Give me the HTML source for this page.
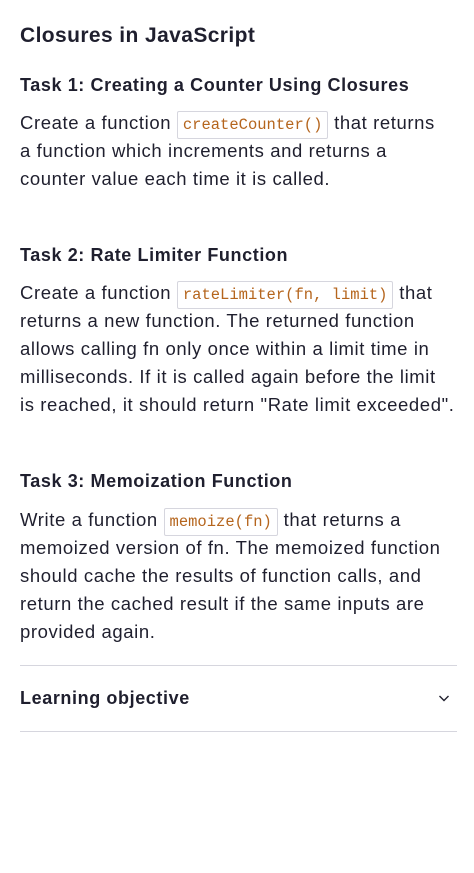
<!DOCTYPE html>
<html><head><meta charset="utf-8"><style>
body{margin:0;background:#fff;width:474px;height:873px;overflow:hidden;font-family:"Liberation Sans",sans-serif;color:#1f1f2e}
.a{position:absolute;left:20px;white-space:nowrap}
h1{font-size:21px;font-weight:bold;margin:0;letter-spacing:0.4px}
h2{font-size:18px;font-weight:bold;margin:0;letter-spacing:0.6px}
p{font-size:18.5px;line-height:28px;margin:0;letter-spacing:0.6px}
code{font-family:"Liberation Mono",monospace;font-size:15.5px;color:#b5651d;border:1px solid #d6d6de;padding:4px 5px;border-radius:2px;letter-spacing:0;line-height:1}
.hr{position:absolute;left:20px;width:437px;height:1px;background:#d6d6de}
</style></head><body>
<h1 class="a" style="top:24px">Closures in JavaScript</h1>
<h2 class="a" style="top:75px">Task 1: Creating a Counter Using Closures</h2>
<p class="a" style="top:109px">Create a function <code>createCounter()</code> that returns<br>a function which increments and returns a<br>counter value each time it is called.</p>
<h2 class="a" style="top:245px">Task 2: Rate Limiter Function</h2>
<p class="a" style="top:279px">Create a function <code>rateLimiter(fn, limit)</code> that<br>returns a new function. The returned function<br>allows calling fn only once within a limit time in<br>milliseconds. If it is called again before the limit<br>is reached, it should return "Rate limit exceeded".</p>
<h2 class="a" style="top:471px">Task 3: Memoization Function</h2>
<p class="a" style="top:506px">Write a function <code>memoize(fn)</code> that returns a<br>memoized version of fn. The memoized function<br>should cache the results of function calls, and<br>return the cached result if the same inputs are<br>provided again.</p>
<div class="hr" style="top:665px"></div>
<h2 class="a" style="top:688px">Learning objective</h2>
<svg style="position:absolute;left:438px;top:692px" width="12" height="12" viewBox="0 0 12 12"><path d="M1.5 4l4.5 4.5L10.5 4" fill="none" stroke="#1f1f2e" stroke-width="1.4"/></svg>
<div class="hr" style="top:731px"></div>
</body></html>
